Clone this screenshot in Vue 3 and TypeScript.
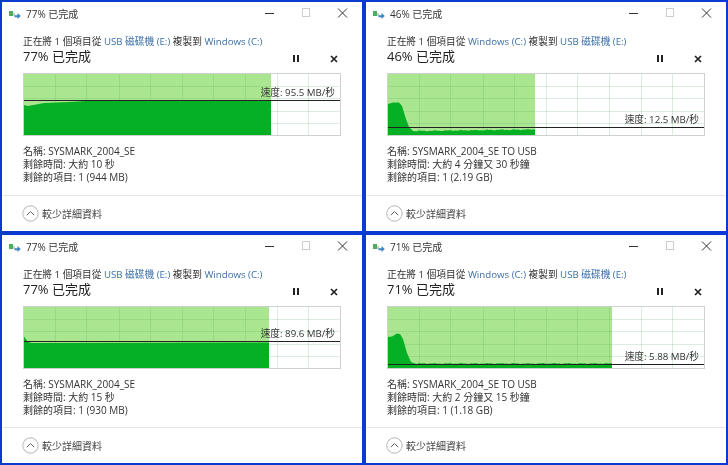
<script setup lang="ts">
type Dialog = {
  pct: number;
  from: string;
  to: string;
  speed: string;
  name: string;
  left: string;
  items: string;
  fillEnd: number;
  lineY: number;
  shape: number[][];
  bumpy: boolean;
};

const dialogs: Dialog[] = [
  {
    pct: 77, from: "USB 磁碟機 (E:)", to: "Windows (C:)", speed: "95.5 MB/秒",
    name: "SYSMARK_2004_SE", left: "大約 10 秒", items: "1 (944 MB)",
    fillEnd: 247, lineY: 26.5,
    shape: [[0, 31], [4, 32], [20, 29], [45, 28], [70, 26.5], [247, 26]],
    bumpy: false,
  },
  {
    pct: 46, from: "Windows (C:)", to: "USB 磁碟機 (E:)", speed: "12.5 MB/秒",
    name: "SYSMARK_2004_SE TO USB", left: "大約 4 分鐘又 30 秒鐘", items: "1 (2.19 GB)",
    fillEnd: 147, lineY: 53.5,
    shape: [[0, 30], [5, 28.5], [11, 28.5], [14, 32], [18, 45], [21, 53], [25, 57], [147, 55.5]],
    bumpy: true,
  },
  {
    pct: 77, from: "USB 磁碟機 (E:)", to: "Windows (C:)", speed: "89.6 MB/秒",
    name: "SYSMARK_2004_SE", left: "大約 15 秒", items: "1 (930 MB)",
    fillEnd: 245, lineY: 34.5,
    shape: [[0, 29.5], [4, 35], [8, 36], [245, 35.5]],
    bumpy: false,
  },
  {
    pct: 71, from: "Windows (C:)", to: "USB 磁碟機 (E:)", speed: "5.88 MB/秒",
    name: "SYSMARK_2004_SE TO USB", left: "大約 2 分鐘又 15 秒鐘", items: "1 (1.18 GB)",
    fillEnd: 224, lineY: 57.5,
    shape: [[0, 30], [4, 29.5], [9, 26.5], [12, 27], [15, 32], [19, 46], [23, 55], [27, 56.5], [224, 56.5]],
    bumpy: true,
  },
];

const chartH = 61;
const gridX = [31, 62, 95, 126, 158, 189, 221, 253, 284];
const gridY = [12, 24, 37, 49];

// dark area under the speed curve, with a small ripple on the slow transfers
function areaPoints(d: Dialog): string {
  const pts: string[] = [];
  const last = d.shape.length - 1;
  d.shape.forEach(([x, y], i) => {
    if (i === last && d.bumpy) {
      const [px, py] = d.shape[i - 1];
      for (let bx = px + 2; bx < x; bx += 2) {
        const t = (bx - px) / (x - px);
        const ripple = Math.sin(bx * 2.3) * Math.sin(bx * 0.37) * 0.6;
        pts.push(`${bx},${py + (y - py) * t + ripple}`);
      }
    }
    pts.push(`${x},${y}`);
  });
  pts.push(`${d.fillEnd},${chartH}`, `0,${chartH}`);
  return pts.join(" ");
}
</script>

<template>
  <div class="screen">
    <section v-for="(d, i) in dialogs" :key="i" class="dialog">
      <header class="titlebar">
        <svg class="copy-icon" width="12" height="8" viewBox="0 0 12 8">
          <rect x="0" y="0" width="4" height="5" fill="#4cae5a" />
          <rect x="4.2" y="2" width="1.6" height="3" fill="#b9c9bb" />
          <path d="M5.5 4.2h3V2l3.3 3-3.3 3V6.2h-3z" fill="#3d86c6" />
        </svg>
        <span class="title">{{ d.pct }}% 已完成</span>
        <div class="window-btns">
          <svg width="36" height="12" viewBox="0 0 36 12"><path d="M0 6.5h9" stroke="#333" stroke-width="1" /></svg>
          <svg width="36" height="12" viewBox="0 0 36 12"><rect x="1.5" y="1.5" width="7" height="8" fill="none" stroke="#ccc" /></svg>
          <svg width="11" height="12" viewBox="0 0 11 12"><path d="M1 1.5l9 9M10 1.5l-9 9" stroke="#333" stroke-width="1" fill="none" /></svg>
        </div>
      </header>

      <div class="body">
        <p class="route">正在將 1 個項目從 <a>{{ d.from }}</a> 複製到 <a>{{ d.to }}</a></p>
        <div class="heading-row">
          <h2>{{ d.pct }}% 已完成</h2>
          <svg class="pause" width="6" height="7" viewBox="0 0 6 7"><path d="M0 0h2v7H0zM4 0h2v7H4z" fill="#222" /></svg>
          <svg class="cancel" width="8" height="8" viewBox="0 0 8 8"><path d="M1 1l6 6M7 1L1 7" stroke="#222" stroke-width="1.7" fill="none" /></svg>
        </div>

        <div class="chart">
          <svg :width="316" :height="chartH" :viewBox="`0 0 316 ${chartH}`">
            <rect x="0" y="0" :width="d.fillEnd" :height="chartH" fill="#a9e68f" />
            <g stroke="#5cae6c" stroke-opacity="0.22" stroke-width="1">
              <path v-for="x in gridX" :key="x" :d="`M${x + 0.5} 0V${chartH}`" />
              <path v-for="y in gridY" :key="y" :d="`M0 ${y + 0.5}H316`" />
            </g>
            <polygon :points="areaPoints(d)" fill="#06b025" />
            <path :d="`M0 ${d.lineY}H316`" stroke="#222" stroke-width="1" />
          </svg>
          <span class="speed" :style="{ top: d.lineY - 15.5 + 'px' }">速度: {{ d.speed }}</span>
        </div>

        <ul class="details">
          <li>名稱: {{ d.name }}</li>
          <li>剩餘時間: {{ d.left }}</li>
          <li>剩餘的項目: {{ d.items }}</li>
        </ul>
      </div>

      <footer class="more">
        <svg width="17" height="17" viewBox="0 0 17 17">
          <circle cx="8.5" cy="8.5" r="7.7" fill="none" stroke="#b4b4b4" />
          <path d="M4.8 10.2l3.7-3.7 3.7 3.7" fill="none" stroke="#666" />
        </svg>
        <span>較少詳細資料</span>
      </footer>
    </section>
  </div>
</template>

<style scoped>
.screen {
  box-sizing: border-box;
  width: 728px;
  height: 465px;
  padding: 2px 2px 2px;
  display: grid;
  grid-template-columns: 360px 360px;
  grid-template-rows: 229px 228px;
  column-gap: 4px;
  row-gap: 4px;
  background: #0a3ad0;
  font-family: "Open Sans", "Noto Sans CJK TC", sans-serif;
  color: #333;
  filter: blur(0.3px);
}

.dialog {
  background: #fff;
  display: flex;
  flex-direction: column;
  overflow: hidden;
}

.titlebar {
  height: 22px;
  padding: 0 14px 0 7px;
  display: flex;
  align-items: center;
}

.copy-icon {
  margin-right: 5px;
  margin-top: 3px;
  flex: none;
}

.title {
  font-size: 10px;
}

.window-btns {
  margin-left: auto;
  display: flex;
  align-items: center;
}

.body {
  padding: 11px 21px 0;
  flex: 1;
}

.route {
  margin: 0;
  font-size: 9.7px;
  line-height: 14px;
  white-space: nowrap;
}

.route a {
  color: #3b6fa5;
}

.heading-row {
  height: 18px;
  display: flex;
  align-items: flex-start;
}

h2 {
  margin: 0;
  font-size: 13px;
  font-weight: 400;
  line-height: 15px;
  color: #222;
}

.pause {
  margin-left: auto;
  margin-right: 31px;
  margin-top: 6px;
}

.cancel {
  margin-right: 3px;
  margin-top: 6px;
}

.chart {
  position: relative;
  width: 318px;
  box-sizing: border-box;
  border: 1px solid #d0d0d0;
  margin-top: 6px;
  height: 63px;
}

.chart svg {
  display: block;
}

.speed {
  position: absolute;
  right: 5px;
  font-size: 9.7px;
  line-height: 15px;
  white-space: nowrap;
}

.details {
  list-style: none;
  margin: 9px 0 0;
  padding: 0;
  font-size: 10px;
  line-height: 13px;
}

.more {
  margin: 0 0 0 1px;
  border-top: 1px solid #e6e6e6;
  height: 35px;
  padding-left: 19px;
  display: flex;
  align-items: center;
  gap: 3px;
  font-size: 10px;
  color: #444;
}
</style>
